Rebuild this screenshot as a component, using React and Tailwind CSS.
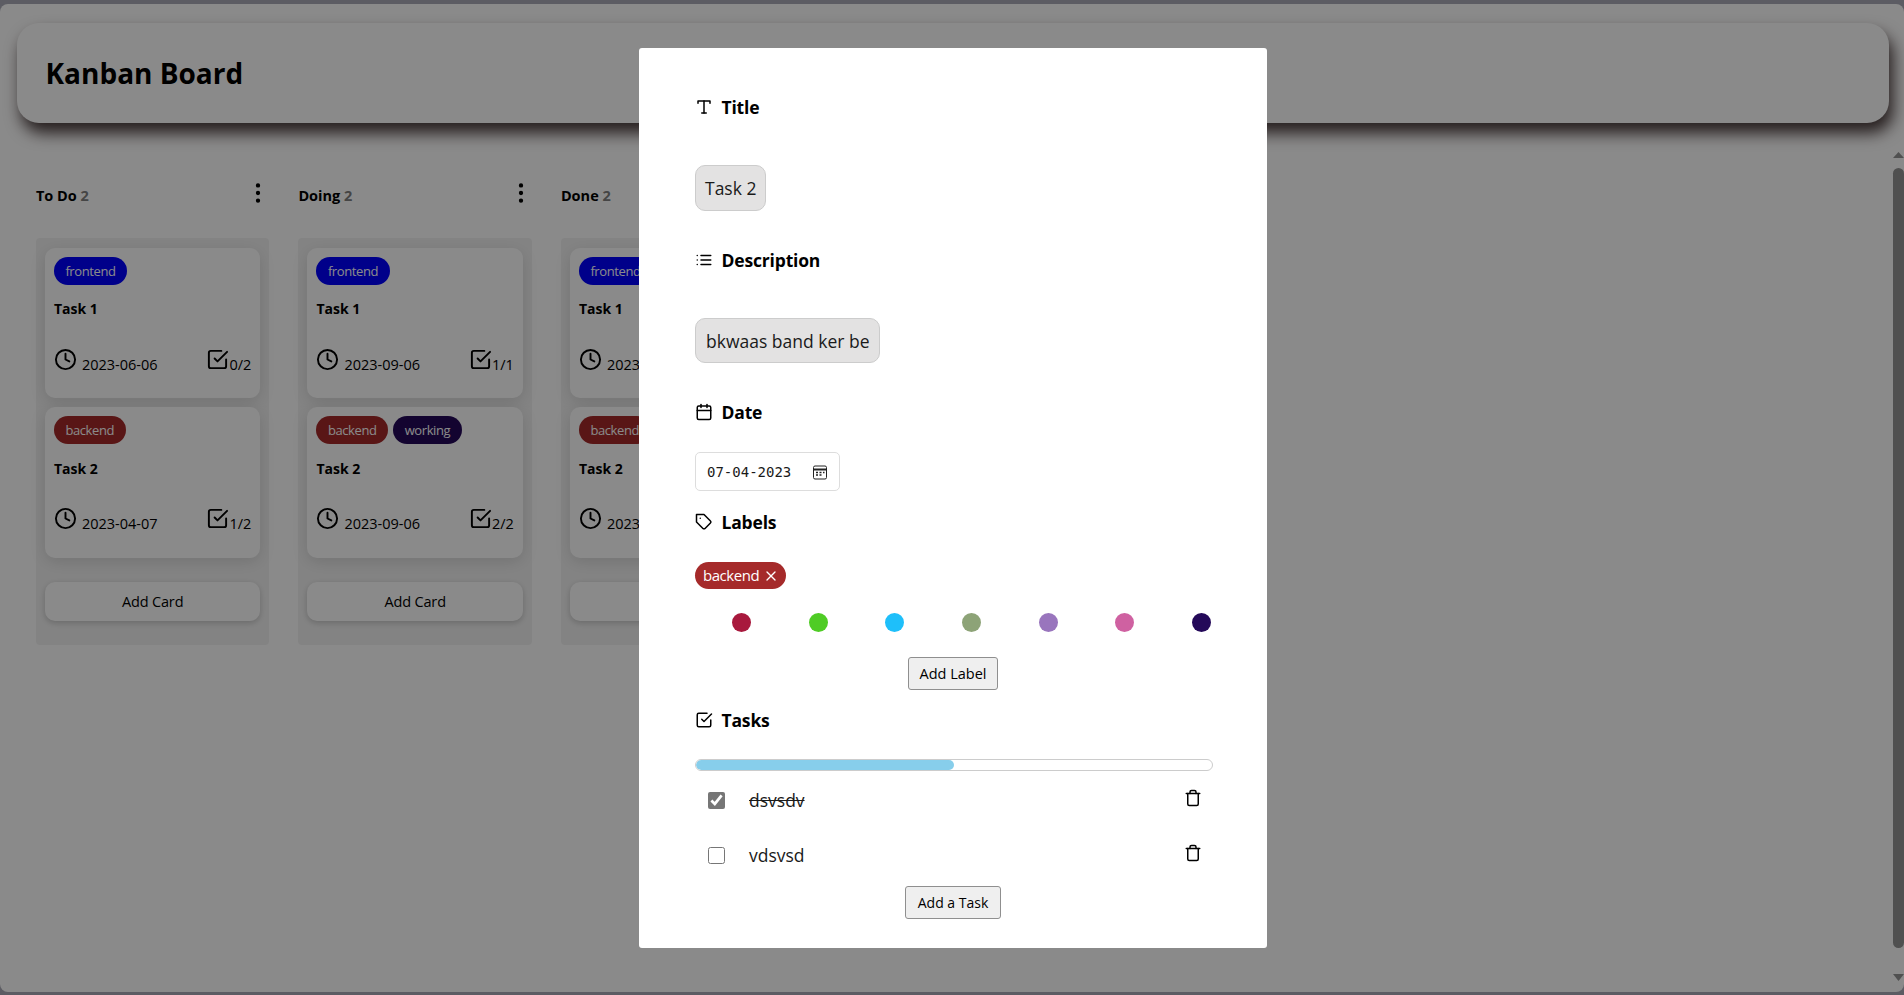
import React from "react";
import { FiType, FiList, FiCalendar, FiTag, FiCheckSquare, FiTrash, FiX, FiClock, FiMoreVertical } from "react-icons/fi";

const columns = [
  {
    title: "To Do",
    cards: [
      { labels: [{ text: "frontend", bg: "bg-[#0000ff]" }], title: "Task 1", date: "2023-06-06", count: "0/2" },
      { labels: [{ text: "backend", bg: "bg-[#a52a2a]" }], title: "Task 2", date: "2023-04-07", count: "1/2" },
    ],
  },
  {
    title: "Doing",
    cards: [
      { labels: [{ text: "frontend", bg: "bg-[#0000ff]" }], title: "Task 1", date: "2023-09-06", count: "1/1" },
      {
        labels: [
          { text: "backend", bg: "bg-[#a52a2a]" },
          { text: "working", bg: "bg-[#240959]" },
        ],
        title: "Task 2",
        date: "2023-09-06",
        count: "2/2",
      },
    ],
  },
  {
    title: "Done",
    cards: [
      { labels: [{ text: "frontend", bg: "bg-[#0000ff]" }], title: "Task 1", date: "2023-09-06", count: "1/1" },
      { labels: [{ text: "backend", bg: "bg-[#a52a2a]" }], title: "Task 2", date: "2023-09-06", count: "2/2" },
    ],
  },
];

const dots = ["bg-[#a8193d]", "bg-[#4fcc25]", "bg-[#1ebffa]", "bg-[#8da377]", "bg-[#9975bd]", "bg-[#cf61a1]", "bg-[#240959]"];

const Card = ({ card }) => (
  <div className="h-[150.5px] shrink-0 rounded-[10px] bg-white px-[9px] pt-[9.3px] shadow-[0_4px_16px_rgba(0,0,0,0.12)]">
    <div className="flex gap-[5px]">
      {card.labels.map((label) => (
        <span key={label.text} className={`h-[28px] rounded-[14px] px-[11.5px] text-[13px] leading-[28px] tracking-[-0.03em] text-white ${label.bg}`}>
          {label.text}
        </span>
      ))}
    </div>
    <p className="mt-[13.5px] h-[22px] text-[14px] leading-[22px] font-bold text-black">{card.title}</p>
    <div className="mt-[27.5px] flex items-start justify-between">
      <div className="flex items-start gap-[5px]">
        <FiClock size={23} className="text-black" />
        <span className="mt-[6px] text-[14.5px] leading-[22px] text-black">{card.date}</span>
      </div>
      <div className="flex items-start">
        <FiCheckSquare size={23} className="text-black" />
        <span className="mt-[6px] text-[14.5px] leading-[22px] text-black">{card.count}</span>
      </div>
    </div>
  </div>
);

const Column = ({ column }) => (
  <div className="w-[233.5px] shrink-0">
    <div className="flex h-[24px] items-center justify-between">
      <p className="translate-y-[0.5px] text-[14.5px] font-bold text-black">
        {column.title} <span className="text-[#808080]">2</span>
      </p>
      <FiMoreVertical size={26} className="-mr-[2px] -translate-y-[2px] text-black" />
    </div>
    <div className="mt-[31px] flex h-[407px] flex-col gap-[9px] rounded-[4px] bg-[#f3f3f3] px-[9px] pt-[9.7px]">
      {column.cards.map((card, i) => (
        <Card key={i} card={card} />
      ))}
      <button className="mt-[15px] h-[39px] shrink-0 rounded-[10px] bg-white pt-[1px] text-[14.5px] tracking-[-0.01em] text-black shadow-[0_2px_6px_rgba(0,0,0,0.2)]">
        Add Card
      </button>
    </div>
  </div>
);

const SectionTitle = ({ icon, text, className }) => (
  <div className={`flex h-[24px] items-center gap-[8.5px] ${className}`}>
    {icon}
    <p className="text-[17.5px] leading-[24px] font-bold tracking-[-0.01em] text-black">{text}</p>
  </div>
);

const TaskRow = ({ text, done, className }) => (
  <div className={`flex h-[17px] items-center pr-[11px] pl-[13px] ${className}`}>
    <input type="checkbox" defaultChecked={done} className="h-[17px] w-[17px] accent-[#767676]" />
    <span className={`ml-[24px] flex-1 text-[17.5px] text-[#1a1a1a] ${done ? "line-through" : ""}`}>{text}</span>
    <FiTrash size={18} className="-translate-y-[3px] text-black" />
  </div>
);

const App = () => {
  return (
    <div className="h-screen overflow-hidden bg-[#aaaab7] pt-[4px] pb-[3px] font-['Open_Sans',sans-serif]">
      <div className="flex h-full flex-col rounded-[8px] bg-white">
        <header className="mt-[19px] mr-[15px] ml-[17px] flex h-[100px] shrink-0 items-center rounded-[22px] bg-white pl-[28.5px] shadow-[4px_10px_16px_rgba(60,45,45,0.95)]">
          <h1 className="text-[28px] font-bold text-black">Kanban Board</h1>
        </header>

        <div className="flex min-h-0 flex-1">
          <div className="flex flex-1 gap-[29px] overflow-hidden pt-[60px] pl-[35.9px]">
            {columns.map((column) => (
              <Column key={column.title} column={column} />
            ))}
          </div>
          <div className="flex w-[16px] shrink-0 flex-col items-center pt-[29px] pb-[11px] pl-[5px]">
            <svg width="11" height="6" viewBox="0 0 11 6" className="shrink-0">
              <path d="M5.5 0L11 6H0z" fill="#949494" />
            </svg>
            <div className="mt-[10px] w-[11px] flex-1 rounded-[6px] bg-[#949494]" />
            <svg width="11" height="7" viewBox="0 0 11 7" className="mt-[26px] shrink-0">
              <path d="M0 0H11L5.5 7z" fill="#949494" />
            </svg>
          </div>
        </div>
      </div>

      {/* modal */}
      <div className="fixed inset-0 flex bg-[rgba(0,0,0,0.46)] pt-[48px] pl-[639px]">
        <div className="flex h-[900px] w-[628px] flex-col rounded-[3px] bg-white pt-[47px] pr-[54px] pl-[56px]">
          <SectionTitle icon={<FiType size={18} />} text="Title" />
          <div className="mt-[46px] flex h-[46px] w-fit items-center rounded-[10px] border border-[#cccccc] bg-[#e3e2e2] px-[9px] text-[17.5px] text-[#1a1a1a]">
            Task 2
          </div>

          <SectionTitle icon={<FiList size={18} />} text="Description" className="mt-[37px]" />
          <div className="mt-[46px] flex h-[45px] w-fit items-center rounded-[10px] border border-[#cccccc] bg-[#e3e2e2] px-[10px] pt-[1px] text-[17.5px] text-[#1a1a1a]">
            bkwaas band ker be
          </div>

          <SectionTitle icon={<FiCalendar size={18} />} text="Date" className="mt-[37px]" />
          <div className="mt-[28px] flex h-[39px] w-[145px] items-center justify-between rounded-[5px] border border-[#dddddd] pt-[1px] pr-[12px] pl-[11px]">
            <span className="font-['DejaVu_Sans_Mono',monospace] text-[14px] text-[#1a1a1a]">07-04-2023</span>
            <svg width="14" height="15" viewBox="0 0 14 15" fill="none" stroke="#222" strokeWidth="1">
              <rect x="0.5" y="1" width="13" height="13" rx="1.5" />
              <path d="M0.5 4.5H13.5" strokeWidth="2" />
              <path d="M3 7.5H5M6.5 7.5H8.5M10 7.5H11.5M3 10H5M6.5 10H8.5" strokeWidth="1.4" />
            </svg>
          </div>

          <SectionTitle icon={<FiTag size={18} />} text="Labels" className="mt-[19px]" />
          <div className="mt-[28px] flex h-[27px] w-fit items-center gap-[4px] rounded-[14px] bg-[#a52a2a] pr-[7px] pl-[8px] text-[15px] tracking-[-0.03em] text-white">
            backend <FiX size={16} />
          </div>
          <div className="mt-[24px] flex h-[19px] justify-between pr-[2px] pl-[37px]">
            {dots.map((dot) => (
              <span key={dot} className={`h-[19px] w-[19px] rounded-full ${dot}`} />
            ))}
          </div>
          <button className="mt-[25px] mr-[2px] h-[33px] w-[90px] self-center rounded-[3px] border border-[#8f8f8f] bg-[#efefef] text-[14.5px] text-black">
            Add Label
          </button>

          <SectionTitle icon={<FiCheckSquare size={18} />} text="Tasks" className="mt-[18px]" />
          <div className="mt-[27px] h-[12px] overflow-hidden rounded-[30px] border border-[#cccccc]">
            <div className="h-full w-1/2 rounded-[30px] bg-[#87ceeb]" />
          </div>
          <TaskRow text="dsvsdv" done className="mt-[21px]" />
          <TaskRow text="vdsvsd" className="mt-[38px]" />
          <button className="mt-[22px] mr-[2px] h-[33px] w-[96px] self-center rounded-[3px] border border-[#8f8f8f] bg-[#efefef] text-[14px] text-black">
            Add a Task
          </button>
        </div>
      </div>
    </div>
  );
};

export default App;
